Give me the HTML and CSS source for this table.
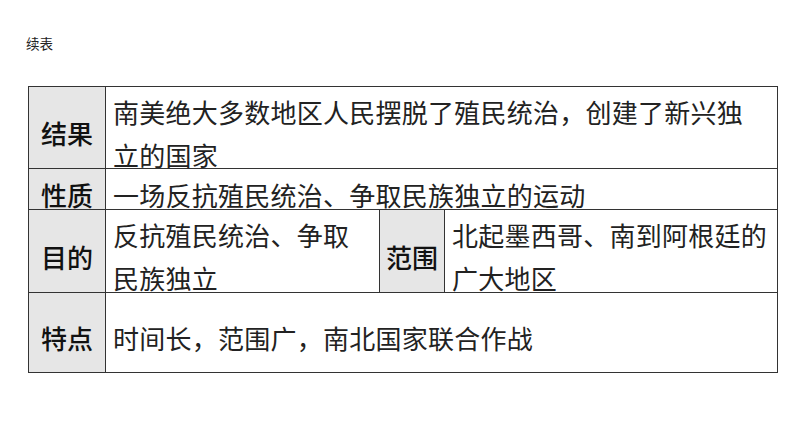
FILE: index.html
```html
<!DOCTYPE html>
<html lang="zh-CN">
<head>
<meta charset="utf-8">
<title>续表</title>
<link rel="stylesheet" href="styles.css">
</head>
<body>
<div class="page">
  <div class="caption">续表</div>
  <div class="table">
    <div class="cell label">结果</div>
    <div class="cell content span3">南美绝大多数地区人民摆脱了殖民统治，创建了新兴独<br>立的国家</div>

    <div class="cell label">性质</div>
    <div class="cell content span3">一场反抗殖民统治、争取民族独立的运动</div>

    <div class="cell label">目的</div>
    <div class="cell content">反抗殖民统治、争取<br>民族独立</div>
    <div class="cell label">范围</div>
    <div class="cell content">北起墨西哥、南到阿根廷的<br>广大地区</div>

    <div class="cell label">特点</div>
    <div class="cell content span3">时间长，范围广，南北国家联合作战</div>
  </div>
</div>
</body>
</html>
```

FILE: styles.css
```css
html, body {
  margin: 0;
  padding: 0;
  background: #ffffff;
}

.page {
  width: 794px;
  height: 447px;
  padding: 34px 0 0 26px;
  box-sizing: border-box;
}

.caption {
  font-family: "Noto Sans CJK SC", "Noto Sans", sans-serif;
  font-size: 13.5px;
  line-height: 18px;
  color: #222;
  height: 18px;
}

.table {
  margin: 34px 0 0 2px;
  display: grid;
  grid-template-columns: 76px 273px 64px 332px;
  grid-template-rows: 81px 40px 82px 79px;
  gap: 1px;
  padding: 1px;
  background: #333333;
  width: max-content;
}

.cell {
  background: #ffffff;
  display: flex;
  align-items: center;
  box-sizing: border-box;
  padding-top: 10px;
  font-family: "Noto Sans CJK SC", "Noto Sans", sans-serif;
  font-size: 26px;
  line-height: 43px;
  white-space: nowrap;
  overflow: visible;
}

.label {
  background: #e6e6e6;
  justify-content: center;
  color: #111111;
  font-weight: 500;
}

.content {
  padding-left: 7px;
  color: #222222;
  letter-spacing: 0.25px;
  font-weight: 400;
}

.span3 {
  grid-column: span 3;
}
```
